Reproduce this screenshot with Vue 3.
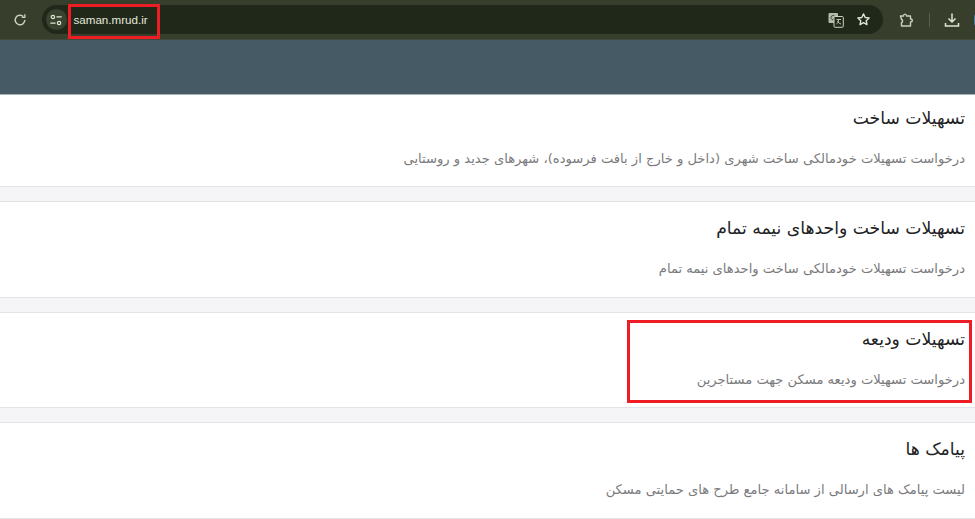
<script setup>
const items = [
  { t: 'تسهیلات ساخت', d: 'درخواست تسهیلات خودمالکی ساخت شهری (داخل و خارج از بافت فرسوده)، شهرهای جدید و روستایی' },
  { t: 'تسهیلات ساخت واحدهای نیمه تمام', d: 'درخواست تسهیلات خودمالکی ساخت واحدهای نیمه تمام' },
  { t: 'تسهیلات ودیعه', d: 'درخواست تسهیلات ودیعه مسکن جهت مستاجرین', mark: true },
  { t: 'پیامک ها', d: 'لیست پیامک های ارسالی از سامانه جامع طرح های حمایتی مسکن' },
]
</script>

<template>
  <div class="page">
    <header class="toolbar">
      <svg class="reload" viewBox="0 0 16 16" width="14" height="14" fill="none" stroke="#c9d1bd" stroke-width="1.700">
        <path d="M13.500 8a5.500 5.500 0 1 1-1.600-3.900" />
        <path d="M13.500 1.500v3.500H10" stroke-width="1.500" />
      </svg>
      <div class="omnibox">
        <span class="tune">
          <svg viewBox="0 0 16 16" width="14" height="14" fill="none" stroke="#dfe5d6" stroke-width="1.400">
            <circle cx="4.500" cy="4.500" r="1.900" />
            <path d="M8.500 4.500h6M1.500 11.500h6" />
            <circle cx="11.500" cy="11.500" r="1.900" />
          </svg>
        </span>
        <span class="url">saman.mrud.ir</span>
        <svg class="translate" viewBox="0 0 16 16" width="16" height="16">
          <rect x="0.500" y="1" width="9.500" height="10" rx="1" fill="#b4b9ad" />
          <path d="M6.800 4.300a2.200 2.200 0 1 0 .3 2.300H5.200" stroke="#3a4032" fill="none" stroke-width=".9" />
          <rect x="6" y="4.500" width="9.300" height="10.800" rx="1" fill="#22281a" stroke="#c9d1bd" />
          <path d="M8.500 7.500h4.500M10.500 7.500c0 2.500-1 4-2 4.500M9.500 9c.5 1.500 2 2.500 3.500 3" stroke="#c9d1bd" fill="none" stroke-width=".9" />
        </svg>
        <svg class="star" viewBox="0 0 16 16" width="15" height="15" fill="none" stroke="#dfe5d6" stroke-width="1.500" stroke-linejoin="round">
          <path d="M8 2l1.800 3.900 4.200.5-3.100 2.900.8 4.200L8 11.400l-3.700 2.100.8-4.200L2 6.400l4.200-.5z" />
        </svg>
      </div>
      <svg class="puzzle" viewBox="0 0 16 16" width="16" height="16" fill="none" stroke="#c9d1bd" stroke-width="1.400" stroke-linejoin="round">
        <path d="M2.500 4H5.500C5.500 1.500 8.500 1.500 8.500 4H12.500V7C15 7 15 10 12.500 10V14H3.500V10.500C5 10.500 5 7.500 3.500 7.500Z" />
      </svg>
      <span class="sep"></span>
      <svg class="download" viewBox="0 0 16 16" width="16" height="16" fill="none" stroke="#dfe5d6" stroke-width="1.500">
        <path d="M8 1.500V10M4.500 6.500L8 10l3.500-3.500M1.500 11v3h13v-3" />
      </svg>
      <span class="avatar"></span>
    </header>
    <div class="banner"></div>
    <main class="list">
      <section v-for="item in items" :key="item.t" class="card">
        <div class="body" :class="{ marked: item.mark }">
          <h2 class="title">{{ item.t }}</h2>
          <p class="desc">{{ item.d }}</p>
        </div>
      </section>
    </main>
    <div class="redbox urlbox"></div>
  </div>
</template>

<style scoped>
.page {
  position: relative;
  width: 975px;
  height: 519px;
  overflow: hidden;
  background: #f5f5f7;
  font-family: "DejaVu Sans", "Liberation Sans", sans-serif;
}
.toolbar {
  height: 39px;
  background: #373f2c;
  border-bottom: 1px solid #3f4a3c;
  display: flex;
  align-items: center;
  padding-left: 13px;
}
.reload { flex: none; }
.omnibox {
  margin-left: 15px;
  width: 841px;
  height: 29px;
  border-radius: 15px;
  background: #20281a;
  display: flex;
  align-items: center;
  box-sizing: border-box;
  padding: 0 12px 0 3.500px;
  flex: none;
}
.tune {
  width: 21px;
  height: 21px;
  border-radius: 50%;
  background: #39432f;
  display: flex;
  align-items: center;
  justify-content: center;
  flex: none;
}
.url {
  margin-left: 7px;
  font: 11.600px "Liberation Sans", sans-serif;
  color: #e4e8dc;
  flex: 1;
}
.translate { margin-right: 12px; }
.puzzle { margin-left: 15px; flex: none; }
.sep {
  width: 1px;
  height: 14px;
  background: #566050;
  margin-left: 15px;
  flex: none;
}
.download { margin-left: 14px; flex: none; }
.avatar {
  width: 10px;
  height: 16px;
  background: #4f7d9c;
  border-radius: 8px;
  margin-left: 14px;
  flex: none;
}
.banner {
  height: 54px;
  background: #465a66;
  border-bottom: 1px solid #a9b2b8;
}
.list {
  display: flex;
  flex-direction: column;
  gap: 14px;
}
.card {
  height: 91px;
  background: #fff;
  border-bottom: 1px solid #e2e3e5;
  box-sizing: content-box;
  direction: rtl;
  padding: 0 10px;
}
.card + .card {
  border-top: 1px solid #e2e3e5;
  height: 94.600px;
}
.body {
  padding-top: 10px;
}
.card + .card .body { padding-top: 13px; }
.title {
  margin: 0;
  font-size: 17.200px;
  line-height: 26px;
  font-weight: 400;
  color: #222224;
}
.desc {
  margin: 17px 0 0;
  font-size: 13.100px;
  line-height: 22px;
  color: #7a7a7d;
}
.marked {
  position: relative;
}
.marked::after {
  content: "";
  position: absolute;
  right: -7px;
  top: 7px;
  width: 339px;
  height: 77px;
  border: 3px solid #ee1c25;
  box-sizing: content-box;
}
.redbox {
  position: absolute;
  border: 3px solid #ee1c25;
}
.urlbox {
  left: 68px;
  top: 4px;
  width: 86px;
  height: 29px;
}
</style>
